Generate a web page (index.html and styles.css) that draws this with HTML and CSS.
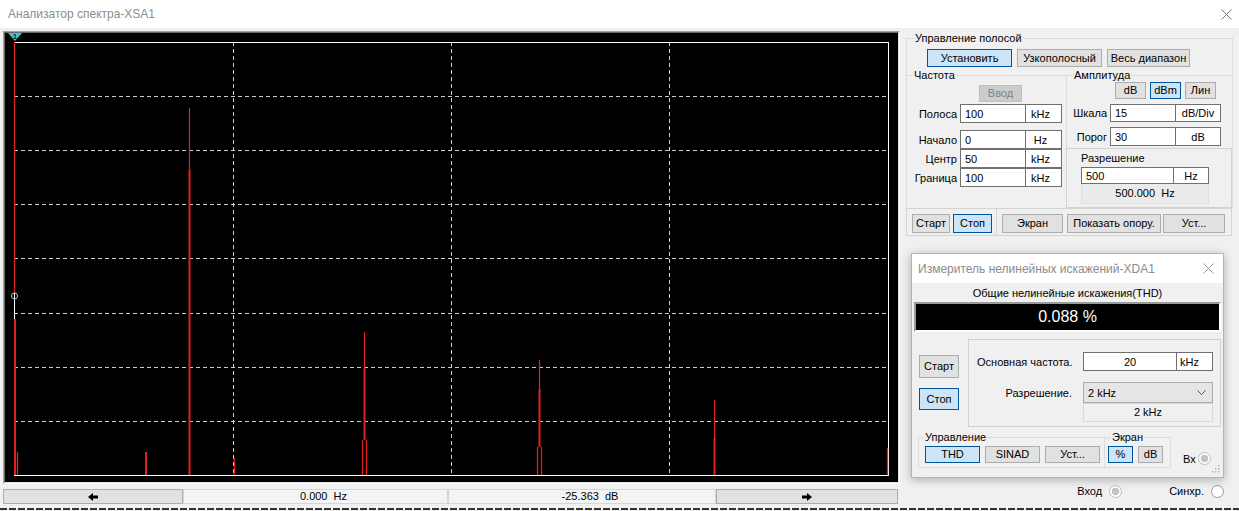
FILE: index.html
```html
<!DOCTYPE html>
<html lang="ru">
  <head>
    <meta charset="UTF-8" />
    <title>Анализатор спектра-XSA1</title>
    <link rel="stylesheet" href="styles.css">
  </head>
  <body>
    <div class="titlebar">
      <span>Анализатор спектра-XSA1</span>
      <svg class="close" width="11" height="11" viewBox="0 0 11 11"><path d="M0.5 0.5L10.5 10.5M10.5 0.5L0.5 10.5" /></svg>
    </div>

    <div class="main">
      <div class="left">
        <div class="scope">
          <div class="screen">
            <svg class="plot" width="893" height="449" viewBox="0 0 893 449">
              <g class="grid">
                <line x1="228.5" y1="9" x2="228.5" y2="442" />
                <line x1="446.5" y1="9" x2="446.5" y2="442" />
                <line x1="664.5" y1="9" x2="664.5" y2="442" />
                <line x1="9" y1="63.5" x2="883" y2="63.5" />
                <line x1="9" y1="117.5" x2="883" y2="117.5" />
                <line x1="9" y1="171.5" x2="883" y2="171.5" />
                <line x1="9" y1="225.5" x2="883" y2="225.5" />
                <line x1="9" y1="280.5" x2="883" y2="280.5" />
                <line x1="9" y1="334.5" x2="883" y2="334.5" />
                <line x1="9" y1="388.5" x2="883" y2="388.5" />
              </g>
              <rect class="frame" x="9.5" y="9.5" width="874" height="433" />

              <!-- DC bin / cursor -->
              <line class="peak" x1="9.5" y1="9" x2="9.5" y2="260" />
              <line class="peak wide" x1="10" y1="286" x2="10" y2="442" />
              <line class="peak" x1="12.5" y1="419" x2="12.5" y2="442" />
              <circle class="hit" cx="9.5" cy="263" r="3" />

              <!-- harmonics -->
              <line class="peak wide" x1="141" y1="419" x2="141" y2="442" />
              <line class="peak thin" x1="184.5" y1="75" x2="184.5" y2="137" />
              <line class="peak wide" x1="184.5" y1="137" x2="184.5" y2="442" />
              <line class="peak" x1="229.5" y1="425" x2="229.5" y2="442" />

              <line class="peak thin" x1="359.5" y1="299" x2="359.5" y2="335" />
              <line class="peak wide" x1="359.5" y1="335" x2="359.5" y2="407" />
              <line class="peak" x1="357.5" y1="407" x2="357.5" y2="442" />
              <line class="peak" x1="361.5" y1="407" x2="361.5" y2="442" />

              <line class="peak thin" x1="534.5" y1="327" x2="534.5" y2="356" />
              <line class="peak wide" x1="534.5" y1="356" x2="534.5" y2="414" />
              <line class="peak" x1="532.5" y1="414" x2="532.5" y2="442" />
              <line class="peak" x1="536.5" y1="414" x2="536.5" y2="442" />

              <line class="peak thin" x1="709.5" y1="367" x2="709.5" y2="405" />
              <line class="peak wide" x1="709.5" y1="405" x2="709.5" y2="442" />

              <line class="peak" x1="882.5" y1="415" x2="882.5" y2="442" />

              <polygon class="marker" points="3,0 17,0 10,8" />
              <text class="marker-num" x="10" y="6">1</text>
            </svg>
          </div>
        </div>
        <div class="readout">
          <button class="btn arrow">
            <svg width="10" height="8" viewBox="0 0 10 8"><polygon points="0,4 5,0 5,2.5 10,2.5 10,5.5 5,5.5 5,8" /></svg>
          </button>
          <div class="value freq-val">0.000&nbsp; Hz</div>
          <div class="value amp-val">-25.363&nbsp; dB</div>
          <button class="btn arrow arrow-right">
            <svg width="10" height="8" viewBox="0 0 10 8"><polygon points="10,4 5,0 5,2.5 0,2.5 0,5.5 5,5.5 5,8" /></svg>
          </button>
        </div>
      </div>

      <div class="side">
        <fieldset class="group band">
          <legend>Управление полосой</legend>
          <div class="band-btns">
            <button class="btn on b-set">Установить</button>
            <button class="btn b-narrow">Узкополосный</button>
            <button class="btn b-full">Весь диапазон</button>
          </div>
          <div class="band-cols">
            <fieldset class="group freq">
              <legend>Частота</legend>
              <button class="btn enter" disabled>Ввод</button>
              <div class="row first">
                <span class="lbl">Полоса</span><span class="field">100</span><span class="unit">kHz</span>
              </div>
              <div class="row second">
                <span class="lbl">Начало</span><span class="field">0</span><span class="unit">Hz</span>
              </div>
              <div class="row">
                <span class="lbl">Центр</span><span class="field">50</span><span class="unit">kHz</span>
              </div>
              <div class="row">
                <span class="lbl">Граница</span><span class="field">100</span><span class="unit">kHz</span>
              </div>
            </fieldset>
            <div class="ampcol">
              <fieldset class="group amp">
                <legend>Амплитуда</legend>
                <div class="scale-btns">
                  <button class="btn">dB</button>
                  <button class="btn on">dBm</button>
                  <button class="btn">Лин</button>
                </div>
                <div class="row">
                  <span class="lbl">Шкала</span><span class="field">15</span><span class="unit">dB/Div</span>
                </div>
                <div class="row">
                  <span class="lbl">Порог</span><span class="field">30</span><span class="unit">dB</span>
                </div>
              </fieldset>
              <div class="res">
                <div class="res-title">Разрешение</div>
                <div class="res-row"><span class="field">500</span><span class="unit">Hz</span></div>
                <div class="res-out">500.000&nbsp; Hz</div>
              </div>
            </div>
          </div>
        </fieldset>

        <div class="actions">
          <div class="act-left">
            <button class="btn a-start">Старт</button>
            <button class="btn on a-stop">Стоп</button>
          </div>
          <div class="act-right">
            <button class="btn a-screen">Экран</button>
            <button class="btn a-ref">Показать опору.</button>
            <button class="btn a-set">Уст...</button>
          </div>
        </div>

        <div class="terminals">
          <span>Вход</span><span class="radio dim"></span>
          <span class="sync">Синхр.</span><span class="radio"></span>
        </div>
      </div>
    </div>

    <div class="edge"></div>

    <div class="thd">
      <div class="thd-title">
        <span>Измеритель нелинейных искажений-XDA1</span>
        <svg class="close" width="11" height="11" viewBox="0 0 11 11"><path d="M0.5 0.5L10.5 10.5M10.5 0.5L0.5 10.5" /></svg>
      </div>
      <div class="thd-caption">Общие нелинейные искажения(THD)</div>
      <div class="thd-display">0.088 %</div>
      <div class="thd-mid">
        <div class="thd-run">
          <button class="btn t-start">Старт</button>
          <button class="btn on t-stop">Стоп</button>
        </div>
        <div class="thd-panel">
          <div class="p-row">
            <span class="p-lbl">Основная частота.</span><span class="field center">20</span><span class="unit">kHz</span>
          </div>
          <div class="p-row second">
            <span class="p-lbl right">Разрешение.</span>
            <span class="select">2 kHz
              <svg width="9" height="5" viewBox="0 0 9 5"><path d="M0.5 0.5L4.5 4.5L8.5 0.5" /></svg>
            </span>
          </div>
          <div class="p-out">2 kHz</div>
        </div>
      </div>
      <div class="thd-groups">
        <fieldset class="group ctrl">
          <legend>Управление</legend>
          <div class="g-btns">
            <button class="btn on">THD</button>
            <button class="btn">SINAD</button>
            <button class="btn">Уст...</button>
          </div>
        </fieldset>
        <fieldset class="group show">
          <legend>Экран</legend>
          <div class="g-btns">
            <button class="btn on">%</button>
            <button class="btn">dB</button>
          </div>
        </fieldset>
        <div class="vx"><span>Вх</span><span class="radio dim"></span></div>
      </div>
      <svg class="grip" width="8" height="8" viewBox="0 0 8 8">
        <rect x="6" y="0" width="1.5" height="1.5" />
        <rect x="3" y="3" width="1.5" height="1.5" />
        <rect x="6" y="3" width="1.5" height="1.5" />
        <rect x="0" y="6" width="1.5" height="1.5" />
        <rect x="3" y="6" width="1.5" height="1.5" />
        <rect x="6" y="6" width="1.5" height="1.5" />
      </svg>
    </div>
  </body>
</html>
```

FILE: styles.css
```css
body {
  margin: 0;
  width: 1239px;
  height: 511px;
  overflow: hidden;
  position: relative;
  background: #f0f0f0;
  color: #000;
  font: 11px "Liberation Sans", Arial, sans-serif;
}

.titlebar {
  height: 28px;
  background: #fff;
  display: flex;
  align-items: center;
  justify-content: space-between;
  padding: 0 7px 0 8px;
  color: #8c8c8c;
  font-size: 12px;
}

.close path {
  stroke: #777;
  stroke-width: 1;
  fill: none;
}

.main {
  display: flex;
  gap: 6px;
  padding: 3px 0 0 3px;
}

/* spectrum screen */

.left {
  width: 897px;
}

.scope {
  height: 453px;
  box-sizing: border-box;
  border: 1px solid;
  border-color: #a0a0a0 #fff #fff #a0a0a0;
}

.screen {
  height: 100%;
  box-sizing: border-box;
  border: 1px solid;
  border-color: #696969 #e3e3e3 #e3e3e3 #696969;
  background: #000;
}

.plot {
  display: block;
}

.grid line {
  stroke: #cfcfcf;
  stroke-width: 1;
  stroke-dasharray: 4 3;
}

.frame {
  fill: none;
  stroke: #fff;
  stroke-width: 1;
}

.peak {
  stroke: #e02020;
  stroke-width: 1.3;
}

.peak.thin {
  stroke: #e42424;
  stroke-width: 1.2;
}

.peak.wide {
  stroke-width: 2;
}

.hit {
  fill: none;
  stroke: #9fd8d8;
  stroke-width: 1;
}

.marker {
  fill: #3cc6cf;
}

.marker-num {
  font: bold 7px "Liberation Sans", sans-serif;
  fill: #024;
  text-anchor: middle;
}

.readout {
  display: flex;
  height: 15px;
  margin-top: 5px;
}

.btn {
  font: inherit;
  color: #000;
  padding: 0;
  margin: 0;
  box-sizing: border-box;
  background: #e1e1e1;
  border: 1px solid #adadad;
  line-height: 1;
  white-space: nowrap;
}

.btn.on {
  background: #cce4f7;
  border-color: #005499;
}

.btn:disabled {
  background: #cccccc;
  border-color: #bfbfbf;
  color: #838383;
}

.arrow {
  width: 180px;
  height: 15px;
  display: flex;
  align-items: center;
  justify-content: center;
}

.arrow-right {
  width: 182px;
}

.arrow svg {
  display: block;
}

.value {
  box-sizing: border-box;
  border: 1px solid #d6d6d6;
  background: #f4f4f4;
  text-align: center;
  line-height: 13px;
  padding-left: 16px;
}

.freq-val {
  width: 265px;
}

.amp-val {
  width: 268px;
}

/* right side controls */

.side {
  width: 327px;
  height: 472px;
  display: flex;
  flex-direction: column;
}

.group {
  margin: 0;
  padding: 0;
  min-width: 0;
  border: 1px solid #dcdcdc;
}

.group legend {
  padding: 0 1px;
  line-height: 14px;
}

.band legend {
  margin-left: 7px;
}

.band-btns {
  display: flex;
  gap: 5px;
  padding: 4px 0 0 20px;
}

.band-btns .btn {
  height: 18px;
}

.b-set {
  width: 85px;
}

.b-narrow {
  width: 85px;
}

.b-full {
  width: 83px;
}

.band-cols {
  display: flex;
  height: 140px;
  margin-top: 1px;
}

.freq {
  width: 160px;
  height: 140px;
  box-sizing: border-box;
  border-left: 0;
  border-bottom: 0;
}

.freq legend {
  margin-left: 6px;
}

.enter {
  display: block;
  width: 43px;
  height: 17px;
  margin: 3px 0 0 72px;
}

.row {
  display: flex;
  align-items: center;
  height: 19px;
}

.row.first {
  margin-top: 2px;
}

.row.second {
  margin-top: 7px;
}

.lbl {
  width: 50px;
  text-align: right;
  margin-right: 3px;
}

.field {
  box-sizing: border-box;
  height: 100%;
  width: 66px;
  background: #fff;
  border: 1px solid #707070;
  padding-left: 4px;
  display: flex;
  align-items: center;
}

.field.center {
  justify-content: center;
  padding-left: 0;
}

.unit {
  box-sizing: border-box;
  height: 100%;
  width: 36px;
  background: #fff;
  border: 1px solid #707070;
  border-left: 0;
  display: flex;
  align-items: center;
  justify-content: center;
  padding-right: 6px;
}

.ampcol {
  width: 165px;
}

.amp {
  height: 80px;
  box-sizing: border-box;
  border-left: 0;
  border-right: 0;
  border-bottom: 0;
}

.amp legend {
  margin-left: 6px;
}

.scale-btns {
  display: flex;
  gap: 4px;
  padding-left: 48px;
}

.scale-btns .btn {
  width: 31px;
  height: 17px;
}

.amp .row {
  margin-top: 5px;
  height: 18px;
}

.amp .row:last-child {
  height: 19px;
}

.amp .lbl {
  width: 40px;
}

.amp .unit {
  width: 45px;
  padding-right: 0;
}

.res {
  box-sizing: border-box;
  height: 60px;
  margin-left: -1px;
  border: 1px solid #d2d2d2;
  padding: 2px 0 0 14px;
}

.res-title {
  line-height: 14px;
}

.res-row {
  display: flex;
  height: 17px;
  margin-top: 2px;
}

.res-row .field {
  width: 93px;
}

.res-row .unit {
  width: 35px;
  padding-right: 0;
}

.res-out {
  box-sizing: border-box;
  width: 128px;
  height: 20px;
  background: #ebebeb;
  border: 1px solid #e0e0e0;
  border-top: 0;
  text-align: center;
  line-height: 19px;
}

.actions {
  display: flex;
  height: 28px;
  margin-top: -1px;
}

.act-left,
.act-right {
  box-sizing: border-box;
  border: 1px solid #d4d4d4;
  display: flex;
  padding: 5px 0 0 5px;
}

.act-left {
  width: 91px;
  gap: 3px;
}

.act-right {
  width: 236px;
  margin-left: -1px;
}

.actions .btn {
  height: 19px;
}

.a-start {
  width: 38px;
}

.a-stop {
  width: 39px;
}

.a-screen {
  width: 61px;
  margin-right: 4px;
}

.a-ref {
  width: 94px;
  margin-right: 2px;
}

.a-set {
  width: 62px;
}

.terminals {
  margin-top: auto;
  margin-bottom: 4px;
  display: flex;
  align-items: center;
  justify-content: flex-end;
  padding-right: 9px;
  height: 16px;
}

.terminals .radio {
  margin-left: 7px;
}

.sync {
  margin-left: 47px;
}

.radio {
  display: inline-block;
  width: 13px;
  height: 13px;
  box-sizing: border-box;
  border-radius: 50%;
  border: 1px solid #9a9a9a;
  background: #fff;
}

.radio.dim {
  border-color: #bdbdbd;
  background: radial-gradient(circle, #c4c4c4 0 3.5px, #fff 4.2px);
}

.edge {
  position: absolute;
  left: 0;
  right: 0;
  bottom: 1px;
  height: 2px;
  background: repeating-linear-gradient(90deg, #333 0 7px, transparent 7px 9px);
}

/* floating THD meter window */

.thd {
  position: absolute;
  left: 911px;
  top: 253px;
  width: 313px;
  height: 225px;
  box-sizing: border-box;
  border: 1px solid #b4b4b4;
  background: #f0f0f0;
  box-shadow: 0 2px 9px rgba(0, 0, 0, 0.28);
}

.thd-title {
  height: 29px;
  background: #fff;
  display: flex;
  align-items: center;
  justify-content: space-between;
  padding: 0 9px 0 6px;
  color: #8c8c8c;
  font-size: 12px;
}

.thd-title .close path {
  stroke: #999;
}

.thd-caption {
  margin-top: 3px;
  line-height: 14px;
  text-align: center;
}

.thd-display {
  box-sizing: border-box;
  height: 30px;
  margin: 2px 2px 0;
  border: 2px solid;
  border-color: #9a9a9a #fff #fff #9a9a9a;
  background: #000;
  color: #fff;
  font-size: 16px;
  line-height: 26px;
  text-align: center;
}

.thd-mid {
  display: flex;
  margin-top: 7px;
}

.thd-run {
  width: 56px;
  box-sizing: border-box;
  padding-left: 7px;
  display: flex;
  flex-direction: column;
}

.t-start {
  width: 40px;
  height: 23px;
  margin-top: 16px;
}

.t-stop {
  width: 40px;
  height: 22px;
  margin-top: 10px;
}

.thd-panel {
  width: 253px;
  height: 88px;
  box-sizing: border-box;
  border: 1px solid #d2d2d2;
}

.p-row {
  display: flex;
  align-items: center;
  height: 19px;
  margin-top: 12px;
}

.p-row.second {
  height: 21px;
  margin-top: 11px;
}

.p-lbl {
  width: 114px;
  box-sizing: border-box;
  padding-left: 8px;
}

.p-lbl.right {
  text-align: right;
  padding: 0 11px 0 0;
}

.p-row .field {
  width: 94px;
}

.p-row .unit {
  width: 36px;
  justify-content: flex-start;
  padding: 0 0 0 3px;
}

.select {
  box-sizing: border-box;
  width: 130px;
  height: 100%;
  background: #e5e5e5;
  border: 1px solid #adadad;
  display: flex;
  align-items: center;
  justify-content: space-between;
  padding: 0 6px 0 4px;
}

.select path {
  fill: none;
  stroke: #555;
  stroke-width: 1;
}

.p-out {
  box-sizing: border-box;
  width: 130px;
  height: 19px;
  margin-left: 114px;
  border: 1px solid #d9d9d9;
  background: #f0f0f0;
  text-align: center;
  line-height: 17px;
}

.thd-groups {
  display: flex;
  margin-top: 3px;
  padding-left: 6px;
}

.ctrl {
  width: 187px;
  height: 38px;
  box-sizing: border-box;
}

.ctrl legend {
  margin-left: 5px;
}

.show {
  width: 67px;
  height: 38px;
  box-sizing: border-box;
  margin-left: -1px;
}

.show legend {
  margin-left: 6px;
}

.g-btns {
  display: flex;
  gap: 5px;
  padding: 2px 0 0 6px;
}

.g-btns .btn {
  width: 55px;
  height: 17px;
}

.show .g-btns {
  padding-left: 3px;
}

.show .g-btns .btn {
  width: 25px;
}

.vx {
  align-self: flex-end;
  display: flex;
  align-items: center;
  gap: 2px;
  margin: 0 0 3px 12px;
}

.grip {
  position: absolute;
  right: 3px;
  bottom: 4px;
}

.grip rect {
  fill: #b5b5b5;
}
```
